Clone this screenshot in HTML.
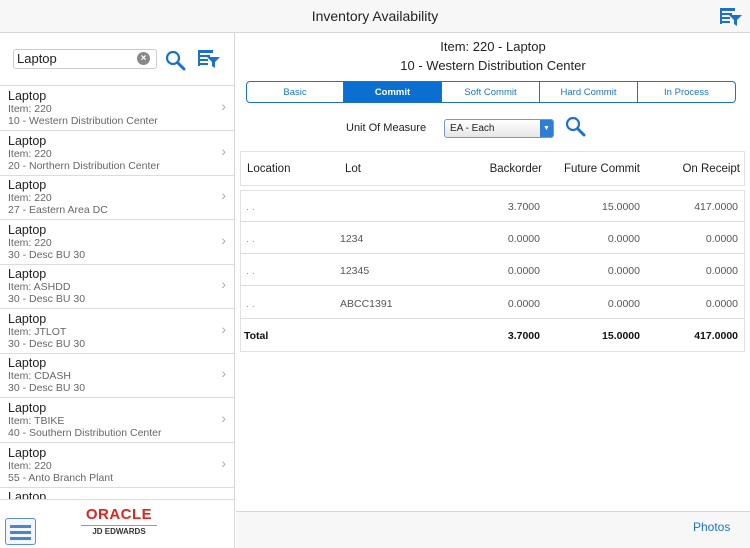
<!DOCTYPE html>
<html><head><style>
*{box-sizing:border-box;margin:0;padding:0}
body{width:750px;height:548px;overflow:hidden;font-family:"Liberation Sans",sans-serif;background:#fff;position:relative;color:#222}
.abs{position:absolute}
#hdr{left:0;top:0;width:750px;height:33px;background:#f7f7f7;border-bottom:1px solid #d6d6d6;text-align:center;font-size:14px;line-height:33px;color:#222}
#left{left:0;top:33px;width:235px;height:515px;border-right:1px solid #d6d6d6}
.item{position:absolute;left:0;width:234px;height:45px;border-bottom:1px solid #dcdcdc;padding:3px 0 0 8px}
.item .t{font-size:12.5px;color:#222;line-height:14px}
.item .s{font-size:10.5px;color:#666;line-height:12px}
.item .c{position:absolute;right:8px;top:12px;color:#aaa;font-size:14px}
.tab{position:absolute;top:81px;height:22px;font-size:9.5px;color:#1a73c8;text-align:center;line-height:21px;border:1px solid #1a73c8;border-left:none}
.row{position:absolute;left:240px;width:505px;height:32px;border-bottom:1px solid #ddd;font-size:10.5px;color:#555;line-height:34px}
.row span{position:absolute}
</style></head><body>
<div id="hdr" class="abs">Inventory Availability</div>
<svg class="abs" style="left:719px;top:7px" width="24" height="20" viewBox="0 0 24 20"><rect x="1" y="1" width="15" height="3" fill="#1a73c8"/><rect x="1" y="6" width="12" height="2" fill="#1a73c8"/><rect x="1" y="10" width="10" height="2" fill="#1a73c8"/><rect x="1" y="14" width="10" height="2" fill="#1a73c8"/><rect x="1" y="1" width="2" height="16" fill="#1a73c8"/><path d="M10 8 H23 L18 13 V19 L15 17 V13 Z" fill="#1a73c8"/></svg>
<div id="left" class="abs">
<div class="abs" style="left:13px;top:16px;width:144px;height:20px;border:1px solid #ccc;border-radius:3px;font-size:13px;line-height:18px;padding-left:3px">Laptop</div>
<div class="abs" style="left:137px;top:19px;width:13px;height:13px;border-radius:50%;background:#888;color:#fff;font-size:10px;line-height:13px;text-align:center;font-weight:bold">×</div>
<svg class="abs" style="left:165px;top:17px" width="22" height="22" viewBox="0 0 22 22"><circle cx="8" cy="8" r="6" fill="none" stroke="#1a73c8" stroke-width="2.2"/><path d="M12.5 12.5 L19 19" stroke="#1a73c8" stroke-width="3" stroke-linecap="round"/></svg>
<svg class="abs" style="left:197px;top:15px" width="24" height="22" viewBox="0 0 24 20"><rect x="1" y="1" width="15" height="3" fill="#1a73c8"/><rect x="1" y="6" width="12" height="2" fill="#1a73c8"/><rect x="1" y="10" width="10" height="2" fill="#1a73c8"/><rect x="1" y="14" width="10" height="2" fill="#1a73c8"/><rect x="1" y="1" width="2" height="16" fill="#1a73c8"/><path d="M10 8 H23 L18 13 V19 L15 17 V13 Z" fill="#1a73c8"/></svg>
<div class="abs" style="left:0;top:52px;width:234px;border-top:1px solid #dcdcdc"></div>
<div class="item" style="top:53px"><div class="t">Laptop</div><div class="s">Item: 220</div><div class="s">10 - Western Distribution Center</div><div class="c">›</div></div>
<div class="item" style="top:98px"><div class="t">Laptop</div><div class="s">Item: 220</div><div class="s">20 - Northern Distribution Center</div><div class="c">›</div></div>
<div class="item" style="top:142px"><div class="t">Laptop</div><div class="s">Item: 220</div><div class="s">27 - Eastern Area DC</div><div class="c">›</div></div>
<div class="item" style="top:187px"><div class="t">Laptop</div><div class="s">Item: 220</div><div class="s">30 - Desc BU 30</div><div class="c">›</div></div>
<div class="item" style="top:231px"><div class="t">Laptop</div><div class="s">Item: ASHDD</div><div class="s">30 - Desc BU 30</div><div class="c">›</div></div>
<div class="item" style="top:276px"><div class="t">Laptop</div><div class="s">Item: JTLOT</div><div class="s">30 - Desc BU 30</div><div class="c">›</div></div>
<div class="item" style="top:320px"><div class="t">Laptop</div><div class="s">Item: CDASH</div><div class="s">30 - Desc BU 30</div><div class="c">›</div></div>
<div class="item" style="top:365px"><div class="t">Laptop</div><div class="s">Item: TBIKE</div><div class="s">40 - Southern Distribution Center</div><div class="c">›</div></div>
<div class="item" style="top:410px"><div class="t">Laptop</div><div class="s">Item: 220</div><div class="s">55 - Anto Branch Plant</div><div class="c">›</div></div>
<div class="item" style="top:454px;height:12px;overflow:hidden;border:none"><div class="t">Laptop</div></div>
<div class="abs" style="left:0;top:466px;width:234px;height:49px;background:#fff;border-top:1px solid #dcdcdc"></div>
<div class="abs" style="left:5px;top:485px;width:31px;height:27px;border:1px solid #5a8fd0;border-radius:3px;background:#f3f7fc"><div style="margin:6px 4px 0;height:3px;background:#4a86cc"></div><div style="margin:3px 4px 0;height:3px;background:#4a86cc"></div><div style="margin:3px 4px 0;height:3px;background:#4a86cc"></div></div>
<div class="abs" style="left:81px;top:474px;width:76px;text-align:center;color:#e2231a;font-weight:bold;font-size:15px;letter-spacing:0.5px;line-height:16px">ORACLE</div>
<div class="abs" style="left:81px;top:492px;width:76px;border-top:1px solid #999"></div>
<div class="abs" style="left:81px;top:494px;width:76px;text-align:center;font-weight:bold;font-size:8px;color:#333">JD EDWARDS</div>
</div>
<div class="abs" style="left:236px;top:37px;width:514px;text-align:center;font-size:13px;line-height:19px;color:#222">Item: 220 - Laptop<br>10 - Western Distribution Center</div>
<div class="tab" style="left:246px;width:98px;border-left:1px solid #1a73c8;border-radius:4px 0 0 4px">Basic</div>
<div class="tab" style="left:344px;width:98px;background:#0a6fd0;color:#fff;font-weight:bold">Commit</div>
<div class="tab" style="left:442px;width:98px">Soft Commit</div>
<div class="tab" style="left:540px;width:98px">Hard Commit</div>
<div class="tab" style="left:638px;width:98px;border-radius:0 4px 4px 0">In Process</div>
<div class="abs" style="left:346px;top:122px;font-size:11px">Unit Of Measure</div>
<div class="abs" style="left:444px;top:119px;width:110px;height:19px;border:1px solid #6f9bd0;border-radius:3px;background:linear-gradient(#fff,#e6e6e6);font-size:10px;line-height:17px;padding-left:5px">EA - Each</div>
<div class="abs" style="left:540px;top:120px;width:13px;height:17px;background:#2d7fd6;border-radius:0 2px 2px 0;color:#fff;font-size:7px;text-align:center;line-height:17px">▼</div>
<svg class="abs" style="left:565px;top:116px" width="22" height="22" viewBox="0 0 22 22"><circle cx="8" cy="8" r="6" fill="none" stroke="#1a73c8" stroke-width="2.2"/><path d="M12.5 12.5 L19 19" stroke="#1a73c8" stroke-width="3" stroke-linecap="round"/></svg>
<div class="abs" style="left:240px;top:151px;width:505px;height:35px;border:1px solid #e2e2e2;font-size:11.5px;line-height:34px;color:#222">
<span class="abs" style="left:6px">Location</span><span class="abs" style="left:104px">Lot</span><span class="abs" style="right:202px">Backorder</span><span class="abs" style="right:104px">Future Commit</span><span class="abs" style="right:4px">On Receipt</span></div>
<div class="abs" style="left:240px;top:190px;width:505px;height:162px;border:1px solid #e2e2e2"></div>
<div class="row" style="top:190px"><span style="left:6px;color:#999">. .</span><span style="right:205px">3.7000</span><span style="right:105px">15.0000</span><span style="right:7px">417.0000</span></div>
<div class="row" style="top:222px"><span style="left:6px;color:#999">. .</span><span style="left:100px">1234</span><span style="right:205px">0.0000</span><span style="right:105px">0.0000</span><span style="right:7px">0.0000</span></div>
<div class="row" style="top:254px"><span style="left:6px;color:#999">. .</span><span style="left:100px">12345</span><span style="right:205px">0.0000</span><span style="right:105px">0.0000</span><span style="right:7px">0.0000</span></div>
<div class="row" style="top:287px"><span style="left:6px;color:#999">. .</span><span style="left:100px">ABCC1391</span><span style="right:205px">0.0000</span><span style="right:105px">0.0000</span><span style="right:7px">0.0000</span></div>
<div class="row" style="top:319px;border:none;font-weight:bold;color:#111"><span style="left:4px">Total</span><span style="right:205px">3.7000</span><span style="right:105px">15.0000</span><span style="right:7px">417.0000</span></div>
<div class="abs" style="left:236px;top:511px;width:514px;height:37px;background:#f7f7f7;border-top:1px solid #d6d6d6"></div>
<div class="abs" style="left:693px;top:520px;font-size:12px;color:#1a73c8">Photos</div>
</body></html>
